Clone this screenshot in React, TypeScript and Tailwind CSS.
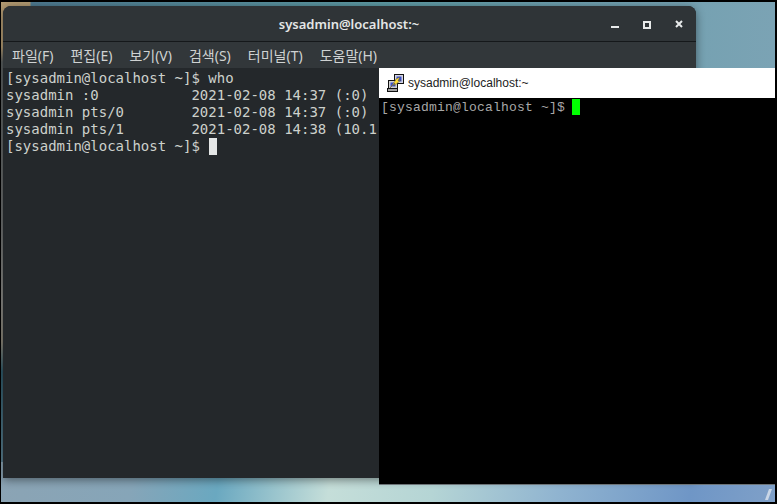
export default function App() {
  const mono = "font-['DejaVu_Sans_Mono','Liberation_Mono',monospace]";
  const menu = ["파일(F)", "편집(E)", "보기(V)", "검색(S)", "터미널(T)", "도움말(H)"];
  const lines = [
    "[sysadmin@localhost ~]$ who",
    "sysadmin :0           2021-02-08 14:37 (:0)",
    "sysadmin pts/0        2021-02-08 14:37 (:0)",
    "sysadmin pts/1        2021-02-08 14:38 (10.1",
  ];
  return (
    <div className="relative w-[777px] h-[504px] overflow-hidden bg-black">
      <div className="absolute left-[1px] top-[2px] right-[2px] bottom-[2px] overflow-hidden bg-[linear-gradient(100deg,#8ea3b2_0%,#86a5b8_25%,#6aa8c0_35%,#c5ded9_48%,#b5d5d5_60%,#8fb3d0_75%,#6f96c6_90%,#7fa0c8_100%)]">
        <div className="absolute left-0 right-0 top-0 h-[400px] bg-[linear-gradient(90deg,#b29a72_0px,#b29a72_29px,#4e7a90_30px,#5d9aa4_380px,#6d9fae_560px,#7ba3b4_100%)]"></div>
        <div className="absolute left-0 top-0 w-[2px] h-[460px] bg-[linear-gradient(180deg,#b29a72_0px,#b29a72_45px,#5a5f60_60px,#6d7070_220px,#8a8a86_300px,#8a8578_340px,#2f5a6a_370px,#5a7f90_460px)]"></div>
        <div className="absolute right-[5px] top-[487px] w-[3px] h-[11px] bg-[#c9d6e6] skew-x-[-20deg]"></div>
      </div>
      <div className="absolute left-[3px] top-[6px] w-[693px] h-[472px] flex flex-col rounded-t-[8px] overflow-hidden bg-[#24282b] shadow-[0_2px_10px_rgba(0,0,0,0.45)] font-['Noto_Sans','Noto_Sans_CJK_KR',sans-serif]">
        <div className="h-[36px] shrink-0 flex items-center justify-center relative bg-[#2f3437] border-b border-[#15181a]">
          <span className="text-[13px] font-semibold text-[#e4e6e6] pt-[3px] ml-[-1px]">sysadmin@localhost:~</span>
          <div className="absolute left-[605px] top-[7px]">
            <svg width="80" height="20" viewBox="0 0 80 20" className="text-[#e8eaea]">
              <rect x="3" y="13" width="8" height="2" fill="currentColor" />
              <rect x="36" y="9" width="6" height="6" fill="none" stroke="currentColor" strokeWidth="2" />
              <path d="M68 8 L74 14 M74 8 L68 14" stroke="currentColor" strokeWidth="2" fill="none" />
            </svg>
          </div>
        </div>
        <div className="h-[26px] shrink-0 flex items-center pl-[9px] gap-[17px] bg-[#32373a] text-[14px] text-[#cfd2d2]">
          {menu.map((m) => (
            <span key={m}>{m}</span>
          ))}
        </div>
        <div className={"flex-1 pl-[3px] pt-[2px] text-[14px] leading-[17px] text-[#cdd1cc] whitespace-pre " + mono}>
          {lines.map((l) => (
            <div key={l}>{l}</div>
          ))}
          <div className="flex items-center">
            <span>{"[sysadmin@localhost ~]$ "}</span>
            <span className="ml-[1px] w-[8px] h-[17px] bg-[#e4e6e6]"></span>
          </div>
        </div>
      </div>
      <div className="absolute left-[379px] top-[68px] w-[396px] h-[417px] flex flex-col bg-black border-b border-[#6d7478]">
        <div className="h-[30px] shrink-0 bg-white flex items-center pl-[8px] gap-[4px] font-['Liberation_Sans',sans-serif] text-[12px] text-[#1c1c1c]">
          <svg width="17" height="18" viewBox="0 0 17 18">
            <rect x="7.5" y="0.5" width="9" height="9" fill="#d4d4e0" stroke="#111" />
            <rect x="9.5" y="2.5" width="5" height="5" fill="#3a4fd0" />
            <rect x="1.5" y="6.5" width="9" height="8" fill="#d0d0d0" stroke="#111" />
            <rect x="3.5" y="8.5" width="5" height="4" fill="#3a4fd0" />
            <rect x="0.5" y="14.5" width="10" height="3" fill="#a0a0a0" stroke="#111" />
            <path d="M3 14 L8 7 L9 5 L13 3 L11 7 L14 6 L7 12 L8 9 Z" fill="#ffdc32" stroke="#333" strokeWidth="0.4" />
          </svg>
          <span>sysadmin@localhost:~</span>
        </div>
        <div className="flex items-start pl-[2px] pt-[2px] h-[18px] font-['Liberation_Mono',monospace] text-[13px] leading-[16px] tracking-[0.2px] text-[#a8a8a8] whitespace-pre">
          <span>{"[sysadmin@localhost ~]$ "}</span>
          <span className="ml-[-1px] mt-[-1px] w-[8px] h-[16px] bg-[#00ff00]"></span>
        </div>
      </div>
    </div>
  );
}
